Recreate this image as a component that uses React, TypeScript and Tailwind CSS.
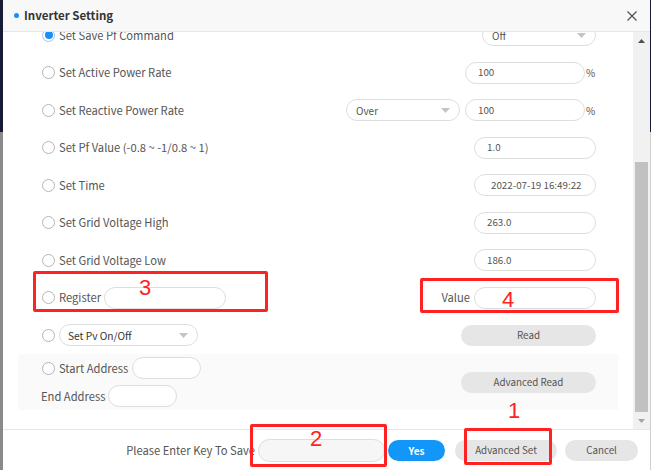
import React from "react";

const font = { fontFamily: '"Noto Sans CJK SC", "Noto Sans", sans-serif' };

function Radio({ checked = false }: { checked?: boolean }) {
  return (
    <span
      className={`flex h-[13px] w-[13px] shrink-0 items-center justify-center rounded-full border bg-white ${
        checked ? "border-[#9cc9f5]" : "border-[#b5b5b5]"
      }`}
    >
      {checked && <span className="h-[8px] w-[8px] rounded-full bg-[#1a8ff5]" />}
    </span>
  );
}

function Input({ w, value = "", pl = "pl-[12px]", h = "h-[22px]", bg = "bg-white" }: { w: string; value?: string; pl?: string; h?: string; bg?: string }) {
  return (
    <div className={`${w} ${h} ${pl} ${bg} flex shrink-0 items-center overflow-hidden whitespace-nowrap rounded-full border border-[#dedede] text-[9.8px] text-[#555]`}>
      {value}
    </div>
  );
}

function Caret() {
  return (
    <svg width="9" height="5" viewBox="0 0 9 5" className="shrink-0">
      <path d="M0 0 L9 0 L4.5 5 Z" fill="#c4c4c4" />
    </svg>
  );
}

function Select({ w, value, pl = "pl-[9px]", dark = false, pr = "pr-[9px]" }: { w: string; value: string; pl?: string; dark?: boolean; pr?: string }) {
  return (
    <div className={`${w} ${pl} ${pr} flex h-[22px] shrink-0 items-center justify-between rounded-full border border-[#dedede] bg-white ${dark ? "text-[10.2px] text-[#333]" : "text-[10px] text-[#555]"}`}>
      <span>{value}</span>
      <Caret />
    </div>
  );
}

function Btn({ w, label }: { w: string; label: string }) {
  return (
    <div className={`${w} flex h-[21px] shrink-0 items-center justify-center rounded-full bg-[#e6e6e6] text-[9.8px] text-[#555]`}>
      {label}
    </div>
  );
}

function Row({ children, right, checked = false }: { children?: React.ReactNode; right?: React.ReactNode; checked?: boolean }) {
  return (
    <div className="flex h-[37.5px] shrink-0 items-center pl-[24px] pr-[22px]">
      <Radio checked={checked} />
      <div className="ml-[4px] flex items-center text-[11.2px] text-[#555]">{children}</div>
      <div className="ml-auto flex items-center">{right}</div>
    </div>
  );
}

function Pct() {
  return <span className="ml-[1px] w-[10px] text-[10px] text-[#555]">%</span>;
}

const redFont = { fontFamily: '"Liberation Sans", sans-serif' };

export default function App() {
  return (
    <div className="relative flex h-[470px] w-[651px] overflow-hidden bg-white" style={font}>
      {/* left background strip */}
      <div className="flex w-[3px] shrink-0 flex-col">
        <div className="h-[132px] bg-[#161c36]" />
        <div className="flex-1 bg-[#8a8a8a]" />
      </div>

      {/* modal */}
      <div className="flex w-[647px] shrink-0 flex-col">
        {/* header */}
        <div className="flex h-[32px] shrink-0 items-center border-b border-[#e6e6e6] bg-[#f8f8f8] pl-[11px] pr-[13px]">
          <span className="h-[5px] w-[5px] rounded-full bg-[#1a8ff5]" />
          <span className="ml-[5px] text-[11.5px] font-bold text-[#333]">Inverter Setting</span>
          <svg width="10" height="10" viewBox="0 0 10 10" className="ml-auto">
            <path d="M0.5 0.5 L9.5 9.5 M9.5 0.5 L0.5 9.5" stroke="#555" strokeWidth="1.3" />
          </svg>
        </div>

        {/* body */}
        <div className="flex h-[397px] shrink-0">
          <div className="flex-1 overflow-hidden pl-[15px] pr-[15px]">
            <div className="-mt-[15.5px] flex flex-col">
              <Row checked right={<Select w="w-[114px]" value="Off" />}>Set Save Pf Command</Row>
              <Row right={<><Input w="w-[120px]" value="100" /><Pct /></>}>Set Active Power Rate</Row>
              <Row
                right={
                  <>
                    <Select w="w-[114px]" value="Over" />
                    <div className="ml-[5px]" />
                    <Input w="w-[120px]" value="100" />
                    <Pct />
                  </>
                }
              >
                Set Reactive Power Rate
              </Row>
              <Row right={<Input w="w-[122px]" value="1.0" />}>Set Pf Value (-0.8 ~ -1/0.8 ~ 1)</Row>
              <Row right={<Input w="w-[122px]" value="2022-07-19 16:49:22" pl="pl-[16px]" />}>Set Time</Row>
              <Row right={<Input w="w-[122px]" value="263.0" />}>Set Grid Voltage High</Row>
              <Row right={<Input w="w-[122px]" value="186.0" />}>Set Grid Voltage Low</Row>
              <Row
                right={
                  <>
                    <span className="mr-[4px] text-[11.2px] text-[#555]">Value</span>
                    <Input w="w-[122px]" />
                  </>
                }
              >
                <span>Register</span>
                <div className="ml-[3px]" />
                <Input w="w-[122px]" />
              </Row>
              <Row right={<Btn w="w-[135px]" label="Read" />}>
                <Select w="w-[139px]" value="Set Pv On/Off" pl="pl-[8px]" dark />
              </Row>

              {/* advanced section */}
              <div className="flex items-center bg-[#fafafa] pr-[22px]">
                <div className="flex flex-col">
                  <div className="flex h-[28px] items-center pl-[24px]">
                    <Radio />
                    <span className="ml-[4px] text-[11.2px] text-[#555]">Start Address</span>
                    <div className="ml-[4px]" />
                    <Input w="w-[69px]" />
                  </div>
                  <div className="flex h-[28px] items-center pl-[23px]">
                    <span className="text-[11.2px] text-[#555]">End Address</span>
                    <div className="ml-[3px]" />
                    <Input w="w-[69px]" />
                  </div>
                </div>
                <div className="ml-auto">
                  <Btn w="w-[135px]" label="Advanced Read" />
                </div>
              </div>
            </div>
          </div>

          {/* scrollbar */}
          <div className="flex w-[17px] shrink-0 flex-col bg-[#f1f1f1]">
            <div className="flex h-[17px] items-center justify-center">
              <svg width="7" height="4" viewBox="0 0 7 4">
                <path d="M0 4 L7 4 L3.5 0 Z" fill="#505050" />
              </svg>
            </div>
            <div className="flex flex-1 flex-col justify-end">
              <div className="mx-auto h-[250px] w-[13px] bg-[#c1c1c1]" />
            </div>
            <div className="flex h-[17px] items-center justify-center">
              <svg width="7" height="4" viewBox="0 0 7 4">
                <path d="M0 0 L7 0 L3.5 4 Z" fill="#a3a3a3" />
              </svg>
            </div>
          </div>
        </div>

        {/* footer */}
        <div className="flex h-[41px] shrink-0 items-center justify-end border-t border-[#e8e8e8] pr-[12px]">
          <span className="text-[11.2px] text-[#555]">Please Enter Key To Save</span>
          <div className="ml-[3px]" />
          <Input w="w-[127px]" h="h-[23px]" bg="bg-[#f6f6f6]" />
          <div className="ml-[3px] flex h-[21px] w-[57px] items-center justify-center rounded-full bg-[#1296f7] text-[10px] font-bold text-white">
            Yes
          </div>
          <div className="ml-[10px]" />
          <Btn w="w-[102px]" label="Advanced Set" />
          <div className="ml-[8px]" />
          <Btn w="w-[73px]" label="Cancel" />
        </div>
      </div>

      {/* right background strip */}
      <div className="flex w-[1px] shrink-0 flex-col">
        <div className="h-[132px] bg-[#161c36]" />
        <div className="flex-1 bg-[#cfcfcf]" />
      </div>

      {/* red annotations */}
      <div className="pointer-events-none absolute left-[33px] top-[271px] h-[41px] w-[235px] rounded-[2px] border-[3px] border-[#ff2222]" />
      <span className="absolute left-[139px] top-[274px] text-[22px] leading-[28px] text-[#ff2222]" style={redFont}>3</span>
      <div className="pointer-events-none absolute left-[420px] top-[278px] h-[35px] w-[199px] rounded-[2px] border-[3px] border-[#ff2222]" />
      <span className="absolute left-[502px] top-[286px] text-[22px] leading-[28px] text-[#ff2222]" style={redFont}>4</span>
      <div className="pointer-events-none absolute left-[250px] top-[424px] h-[43px] w-[137px] rounded-[2px] border-[3px] border-[#ff2222]" />
      <span className="absolute left-[310px] top-[425px] text-[22px] leading-[28px] text-[#ff2222]" style={redFont}>2</span>
      <div className="pointer-events-none absolute left-[464px] top-[428px] h-[37px] w-[88px] rounded-[2px] border-[3px] border-[#ff2222]" />
      <span className="absolute left-[508px] top-[397px] text-[22px] leading-[28px] text-[#ff2222]" style={redFont}>1</span>
    </div>
  );
}
